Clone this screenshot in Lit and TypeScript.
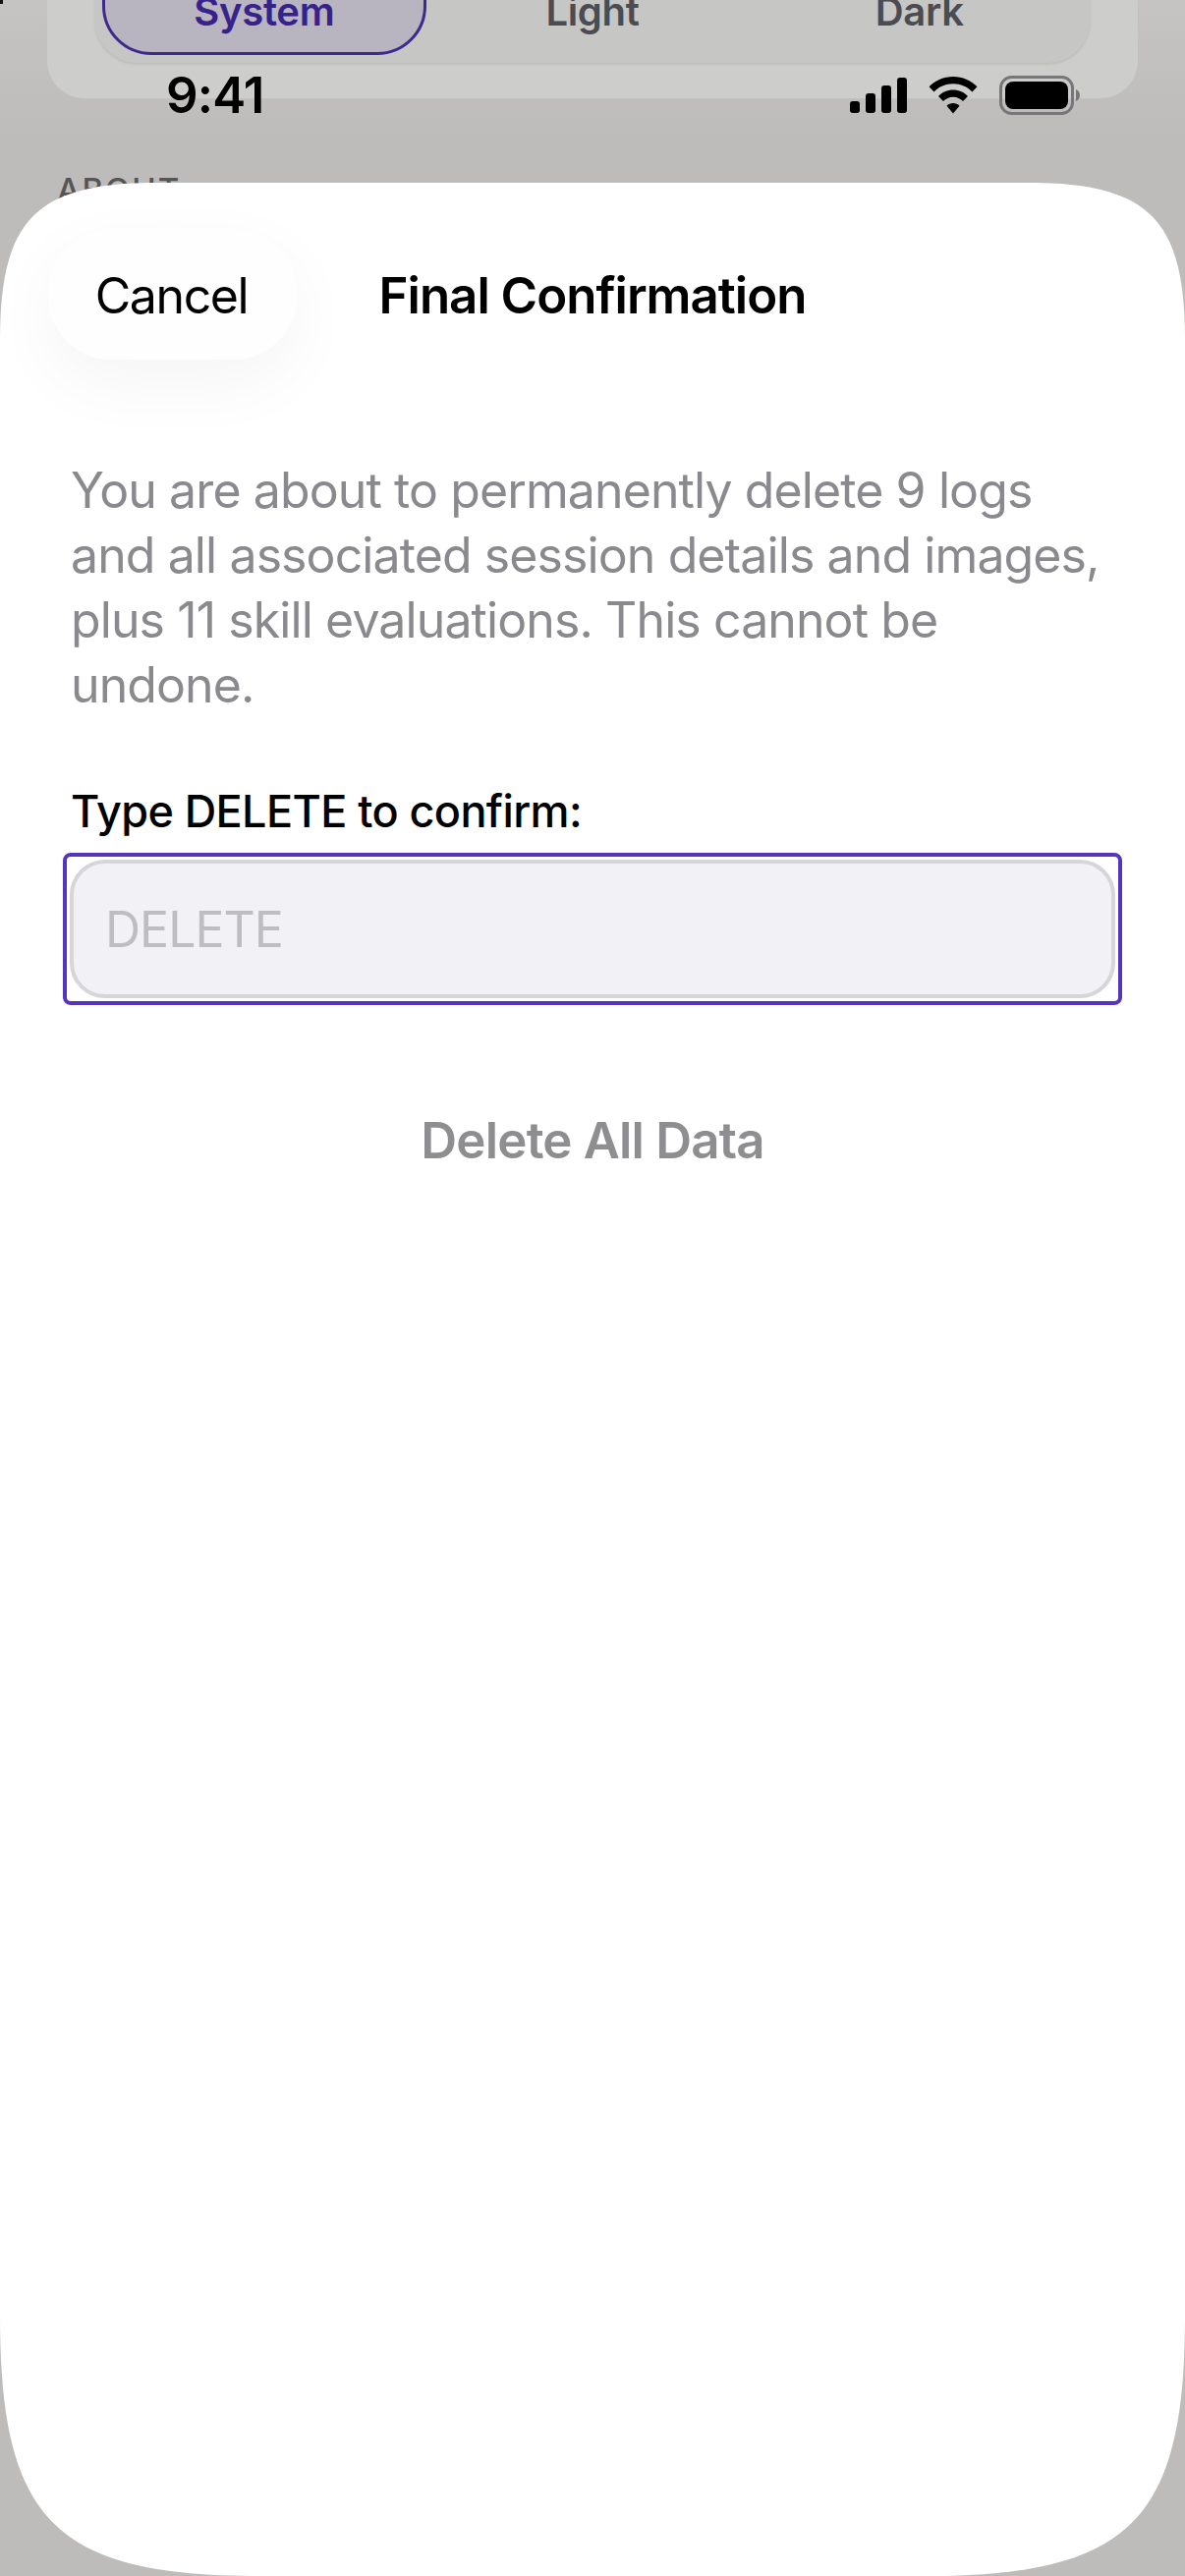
import { LitElement, html, css } from "lit";
import { customElement } from "lit/decorators.js";

@customElement("app-root")
export class AppRoot extends LitElement {
  static styles = css`
    :host { display: block; width: 1206px; height: 2622px; font-family: Inter, "Liberation Sans", sans-serif; }
    * { box-sizing: border-box; }
    .screen { position: relative; width: 1206px; height: 2622px; overflow: hidden; background: linear-gradient(180deg, #c5c4c2 0, #bdbcba 140px); }
    .speck { position: absolute; left: 0; top: 0; width: 3px; height: 4px; background: #111; }
    .behind { padding: 0 48px; margin-top: -60px; }
    .card { height: 160px; border-radius: 0 0 38px 38px; background: #cdcdcc; padding: 0 48px 36px 48px; box-shadow: 0 1px 1px #c2c2c0; }
    .seg { height: 124px; display: grid; grid-template-columns: 1fr 1fr 1fr; border-radius: 0 0 44px 44px; background: #c6c6c4; box-shadow: 0 2px 2px #bebebc; padding: 0 8px 8px; }
    .seg span { display: flex; align-items: flex-end; justify-content: center; padding-bottom: 19px; font-size: 40px; font-weight: 600; letter-spacing: -0.3px; color: #4a4b53; line-height: 50px; }
    .seg .on { margin-right: 3px; background: #b8b4c0; border: 3px solid #3d2a8c; border-radius: 0 0 50px 50px; color: #37228a; padding-bottom: 16px; }
    .about { margin: 71px 0 0 10px; font-size: 33px; font-weight: 500; letter-spacing: 2px; color: #555; line-height: 44px; }
    .status { position: absolute; left: 169px; right: 107px; top: 72px; height: 50px; display: flex; align-items: center; justify-content: space-between; }
    .time { font-size: 51px; font-weight: 600; letter-spacing: -0.8px; color: #000; line-height: 50px; }
    .icons { display: flex; align-items: center; gap: 22px; }
    .sheet { position: absolute; left: 0; right: 0; top: 186px; bottom: 0; background: #fff;
      clip-path: path("M0 160C0 37 37 0 160 0L1046 0C1169 0 1206 37 1206 160L1206 2171C1206 2380 1150 2436 941 2436L265 2436C56 2436 0 2380 0 2171Z"); }
    .head { display: grid; grid-template-columns: 1fr auto 1fr; align-items: center; padding: 47px 49px 0; }
    .cancel { justify-self: start; width: 253px; height: 133px; display: flex; align-items: center; justify-content: center; padding: 2px 2px 0 0; border-radius: 64px; background: #fefefe; box-shadow: 0 24px 70px rgba(0,0,0,0.045); font-size: 50px; letter-spacing: -1.4px; color: #000; }
    .title { padding-top: 2px; font-size: 51px; font-weight: 600; letter-spacing: -1px; color: #000; }
    .body { padding: 100px 72px 0; }
    .para { margin: 0; font-size: 50px; line-height: 66px; letter-spacing: -0.9px; color: #8a8a8e; }
    .label { margin-top: 69px; font-size: 45px; line-height: 54px; font-weight: 500; letter-spacing: -0.6px; color: #000; }
    .ring { margin: 15px -8px 0; height: 155px; border: 4px solid #5536bb; border-radius: 8px; padding: 3px; }
    .input { height: 141px; display: flex; align-items: center; padding: 0 32px; background: #f1f1f6; border: 4px solid #d6d6da; border-radius: 36px; font-size: 50px; letter-spacing: -1px; color: #bdbdc2; }
    .del { margin-top: 107px; text-align: center; font-size: 51px; line-height: 62px; font-weight: 600; letter-spacing: -0.8px; color: #8e8e90; }
  `;

  render() {
    return html`
      <div class="screen">
        <div class="speck"></div>
        <div class="behind">
          <div class="card">
            <div class="seg">
              <span class="on">System</span><span>Light</span><span>Dark</span>
            </div>
          </div>
          <div class="about">ABOUT</div>
        </div>
        <div class="status">
          <span class="time">9:41</span>
          <div class="icons">
            <svg width="58" height="36" viewBox="0 0 58 36" fill="#000">
              <rect x="0" y="24" width="10" height="12" rx="3"/>
              <rect x="16" y="16" width="10" height="20" rx="3"/>
              <rect x="32" y="8" width="10" height="28" rx="3"/>
              <rect x="48" y="0" width="10" height="36" rx="3"/>
            </svg>
            <svg width="50" height="38" viewBox="0 0 50 38" fill="#000">
              <path d="M25 0C34.500 0 43.200 3.900 49.500 10.300L44.500 15.500C39.500 10.400 32.600 7.300 25 7.300S10.500 10.400 5.500 15.500L.5 10.300C6.800 3.900 15.500 0 25 0Z"/>
              <path d="M25 13.500C30.900 13.500 36.200 15.900 40 19.900L35 25C32.500 22.300 28.900 20.700 25 20.700S17.500 22.300 15 25L10 19.900C13.800 15.900 19.100 13.500 25 13.500Z"/>
              <path d="M25 27C27.500 27 29.800 28 31.500 29.700L25 37.500 18.500 29.700C20.200 28 22.500 27 25 27Z"/>
            </svg>
            <svg width="82" height="40" viewBox="0 0 82 40">
              <rect x="1.500" y="1.500" width="73" height="37" rx="11" fill="none" stroke="#77777a" stroke-width="3"/>
              <rect x="6" y="6" width="64" height="28" rx="8" fill="#000"/>
              <path d="M78 14c2.500 1 4 3 4 6s-1.500 5-4 6Z" fill="#77777a"/>
            </svg>
          </div>
        </div>
        <div class="sheet">
          <div class="head">
            <div class="cancel">Cancel</div>
            <div class="title">Final Confirmation</div>
            <div></div>
          </div>
          <div class="body">
            <p class="para">You are about to permanently delete 9 logs and all associated session details and images, plus 11 skill evaluations. This cannot be undone.</p>
            <div class="label">Type DELETE to confirm:</div>
            <div class="ring"><div class="input">DELETE</div></div>
            <div class="del">Delete All Data</div>
          </div>
        </div>
      </div>
    `;
  }
}
